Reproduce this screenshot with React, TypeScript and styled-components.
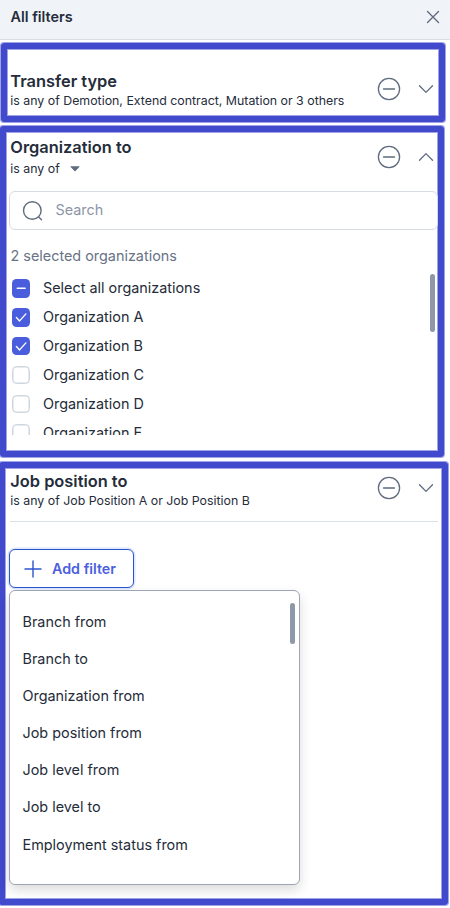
import React from "react";
import styled, { createGlobalStyle } from "styled-components";

const GlobalStyle = createGlobalStyle`
  * { box-sizing: border-box; }
  body { margin: 0; background: #fff; font-family: Inter, "Liberation Sans", sans-serif; color: #252c3a; overflow: hidden; }
`;

const Panel = styled.main`
  width: 450px;
  height: 908px;
  display: flex;
  flex-direction: column;
  overflow: hidden;
  background: #fff;
`;

const Header = styled.header`
  flex: none;
  height: 40px;
  padding: 0 10.5px 6px 10.5px;
  display: flex;
  align-items: center;
  justify-content: space-between;
  background: #f0f3f8;
  border-bottom: 1px solid #d9dde6;
`;

const HeaderTitle = styled.h1`
  margin: 0;
  font-size: 14.4px;
  line-height: 20px;
  font-weight: 600;
`;

const Frame = styled.section<{ $top: number; $left: number; $width: number; $height: number }>`
  flex: none;
  width: ${(p) => p.$width}px;
  height: ${(p) => p.$height}px;
  margin-top: ${(p) => p.$top}px;
  margin-left: ${(p) => p.$left}px;
  border: 6px solid #4149cd;
  border-radius: 3px;
  box-shadow: 0 0 0 1px rgba(65, 73, 205, 0.5), inset 0 0 0 1px rgba(65, 73, 205, 0.5);
`;

const FilterHead = styled.div<{ $top: number; $left: number }>`
  display: flex;
  justify-content: space-between;
  width: 424px;
  height: 42px;
  margin-top: ${(p) => p.$top}px;
  margin-left: ${(p) => p.$left}px;
`;

const Title = styled.h2`
  margin: 0;
  font-size: 16.4px;
  line-height: 20px;
  font-weight: 600;
  white-space: nowrap;
`;

const Summary = styled.p<{ $drop?: number }>`
  display: flex;
  align-items: center;
  gap: 10px;
  margin: ${(p) => p.$drop ?? 0}px 0 0;
  font-size: 12.36px;
  line-height: 20px;
  white-space: nowrap;
`;

const Actions = styled.div<{ $top: number }>`
  display: flex;
  align-items: center;
  gap: 17.5px;
  height: 24px;
  margin-top: ${(p) => p.$top}px;
`;

const IconButton = styled.button`
  display: flex;
  padding: 0;
  border: 0;
  background: none;
  color: #5f6b7e;
`;

const SearchBox = styled.div`
  display: flex;
  align-items: center;
  gap: 11.5px;
  width: 429px;
  height: 39px;
  margin: 12px 0 0 3px;
  padding-left: 12px;
  border: 1px solid #d7dbe4;
  border-radius: 6px;
  color: #5f6b7e;
`;

const Placeholder = styled.span`
  margin-top: -2px;
  font-size: 14.4px;
  color: #8d96a8;
`;

const Count = styled.p`
  margin: 16px 0 0 4.5px;
  font-size: 14.4px;
  line-height: 20px;
  color: #687386;
`;

const ListArea = styled.div`
  display: flex;
  justify-content: space-between;
  width: 423.5px;
  height: 161px;
  margin: 8px 0 0 5.5px;
  overflow: hidden;
`;

const Scrollbar = styled.div<{ $height: number }>`
  flex: none;
  width: 5px;
  height: ${(p) => p.$height}px;
  border-radius: 2.5px;
  background: #8f98a9;
`;

const Options = styled.div`
  display: flex;
  flex-direction: column;
`;

const Option = styled.label`
  flex: none;
  display: flex;
  align-items: center;
  gap: 13px;
  height: 28.9px;
  font-size: 14.4px;
  line-height: 20px;
`;

const Box = styled.span<{ $filled: boolean }>`
  display: flex;
  width: 18.5px;
  height: 18.5px;
  border-radius: 4.5px;
  background: ${(p) => (p.$filled ? "#4a5ddd" : "#fff")};
  border: ${(p) => (p.$filled ? "0" : "1.5px solid #cfd5df")};
  box-shadow: ${(p) => (p.$filled ? "none" : "inset 0 0 0 0.5px #cfd5df")};
`;

const Divider = styled.hr`
  width: 428px;
  height: 1px;
  margin: 8px 0 0 5px;
  border: 0;
  background: #dadfe8;
`;

const AddButton = styled.button`
  display: flex;
  align-items: center;
  gap: 10px;
  width: 125px;
  height: 39px;
  margin: 27px 0 0 4px;
  padding: 0 0 0 14px;
  border: 1px solid #2c54cf;
  border-radius: 6px;
  background: #fff;
  box-shadow: 0 0 0 1.5px #dce8fb;
  color: #4d5fe0;
  font: 600 14.3px/20px Inter, sans-serif;
  white-space: nowrap;
`;

const Menu = styled.div`
  display: flex;
  justify-content: space-between;
  width: 291px;
  height: 295px;
  margin: 2px 0 0 4px;
  padding: 12px 4px 0 12.5px;
  border: 1px solid #9ca4b5;
  border-radius: 6px;
  background: #fff;
  box-shadow: 0 5px 12px rgba(0, 0, 0, 0.14);
`;

const MenuItem = styled.div`
  flex: none;
  height: 37.1px;
  font-size: 14.4px;
  line-height: 37px;
  white-space: nowrap;
`;

const Remove = () => (
  <IconButton aria-label="Remove filter">
    <svg width="24" height="24" viewBox="0 0 24 24" fill="none" stroke="currentColor" strokeWidth="1.3" strokeLinecap="round">
      <circle cx="12" cy="12" r="10.6" />
      <path d="M6.500 12h11" />
    </svg>
  </IconButton>
);

const Chevron = ({ up }: { up?: boolean }) => (
  <IconButton aria-label={up ? "Collapse" : "Expand"}>
    <svg width="16" height="10" viewBox="0 0 16 10" fill="none" stroke="currentColor" strokeWidth="1.3" strokeLinecap="round" strokeLinejoin="round">
      <path d={up ? "M1.500 8.300 8 1.600l6.500 6.700" : "M1.500 1.700 8 8.400l6.500-6.700"} />
    </svg>
  </IconButton>
);

const options = [
  { label: "Select all organizations", mark: "M5.2 9.2h8" },
  { label: "Organization A", mark: "M4.4 9.6l3.2 3.3 6.3-7" },
  { label: "Organization B", mark: "M4.4 9.6l3.2 3.3 6.3-7" },
  { label: "Organization C", mark: "" },
  { label: "Organization D", mark: "" },
  { label: "Organization E", mark: "" },
];

const menuItems = [
  "Branch from",
  "Branch to",
  "Organization from",
  "Job position from",
  "Job level from",
  "Job level to",
  "Employment status from",
];

export default function App() {
  return (
    <>
      <GlobalStyle />
      <Panel>
        <Header>
          <HeaderTitle>All filters</HeaderTitle>
          <IconButton aria-label="Close">
            <svg width="14" height="14" viewBox="0 0 14 14" fill="none" stroke="currentColor" strokeWidth="1.4" strokeLinecap="round">
              <path d="M1.500 1.500l11 11M12.500 1.500l-11 11" />
            </svg>
          </IconButton>
        </Header>

        <Frame $top={3} $left={1} $width={444} $height={79}>
          <FilterHead $top={22} $left={3.3}>
            <div>
              <Title>Transfer type</Title>
              <Summary>is any of Demotion, Extend contract, Mutation or 3 others</Summary>
            </div>
            <Actions $top={6}>
              <Remove />
              <Chevron />
            </Actions>
          </FilterHead>
        </Frame>

        <Frame $top={4} $left={0} $width={444} $height={331}>
          <FilterHead $top={5} $left={4.3}>
            <div>
              <Title>Organization to</Title>
              <Summary $drop={2}>
                is any of
                <svg width="10" height="6" viewBox="0 0 10 6" fill="#5f6b7e">
                  <path d="M.9.3h8.200q.8 0 .25.600L5.500 5.100q-.5.500-1 0L.65.900Q.1.300.9.300z" />
                </svg>
              </Summary>
            </div>
            <Actions $top={8}>
              <Remove />
              <Chevron up />
            </Actions>
          </FilterHead>
          <SearchBox>
            <svg width="22" height="22" viewBox="0 0 22 22" fill="none" stroke="currentColor" strokeWidth="1.4" strokeLinecap="round">
              <circle cx="10.300" cy="10.500" r="8.800" />
              <path d="M17 17.200l2.500 2.500" />
            </svg>
            <Placeholder>Search</Placeholder>
          </SearchBox>
          <Count>2 selected organizations</Count>
          <ListArea>
            <Options>
              {options.map((o) => (
                <Option key={o.label}>
                  <Box $filled={o.mark !== ""}>
                    {o.mark && (
                      <svg width="18.5" height="18.5" viewBox="0 0 18.500 18.500" fill="none" stroke="#fff" strokeWidth="1.4" strokeLinecap="round" strokeLinejoin="round">
                        <path d={o.mark} />
                      </svg>
                    )}
                  </Box>
                  {o.label}
                </Option>
              ))}
            </Options>
            <Scrollbar $height={58} />
          </ListArea>
        </Frame>

        <Frame $top={5} $left={-1} $width={449} $height={443}>
          <FilterHead $top={3} $left={5.3}>
            <div>
              <Title>Job position to</Title>
              <Summary>is any of Job Position A or Job Position B</Summary>
            </div>
            <Actions $top={5}>
              <Remove />
              <Chevron />
            </Actions>
          </FilterHead>
          <Divider />
          <AddButton>
            <svg width="18" height="18" viewBox="0 0 18 18" fill="none" stroke="#2c54cf" strokeWidth="1.4" strokeLinecap="round">
              <path d="M9 1v16M1 9h16" />
            </svg>
            Add filter
          </AddButton>
          <Menu>
            <div>
              {menuItems.map((m) => (
                <MenuItem key={m}>{m}</MenuItem>
              ))}
            </div>
            <Scrollbar $height={41} />
          </Menu>
        </Frame>
      </Panel>
    </>
  );
}
